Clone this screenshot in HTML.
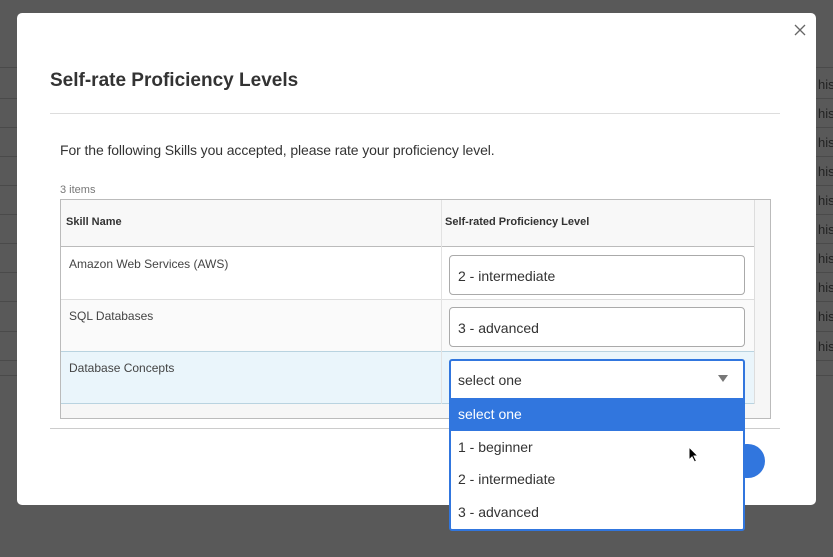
<!DOCTYPE html>
<html><head><style>
*{box-sizing:border-box;margin:0;padding:0}
body{width:833px;height:557px;overflow:hidden;background:#595959;font-family:"Liberation Sans",sans-serif;position:relative;color:#333}
.hl{position:absolute;left:0;right:0;height:1px;background:#4a4a4a}
.his{position:absolute;left:818px;font-size:13px;color:#222}
.modal{position:absolute;left:17px;top:13px;width:799px;height:492px;background:#fff;border-radius:5px}
.a{position:absolute}
.row{position:absolute;left:0;width:693px;border-bottom:1px solid #ddd}
.sel{position:absolute;left:449px;width:296px;height:36px;border:1px solid #aaa;border-radius:4px;background:#fff;font-size:14px;color:#333;padding:10px 8px}
</style></head><body>
<div class="hl" style="top:67px"></div>
<div class="hl" style="top:98px"></div><div class="hl" style="top:127px"></div><div class="hl" style="top:156px"></div><div class="hl" style="top:185px"></div><div class="hl" style="top:214px"></div><div class="hl" style="top:243px"></div><div class="hl" style="top:272px"></div><div class="hl" style="top:301px"></div><div class="hl" style="top:331px"></div><div class="hl" style="top:360px"></div><div class="hl" style="top:375px"></div>
<div class="his" style="top:77px">his</div><div class="his" style="top:106px">his</div><div class="his" style="top:135px">his</div><div class="his" style="top:164px">his</div><div class="his" style="top:193px">his</div><div class="his" style="top:222px">his</div><div class="his" style="top:251px">his</div><div class="his" style="top:280px">his</div><div class="his" style="top:309px">his</div><div class="his" style="top:339px">his</div>
<div class="modal"></div>
<svg class="a" style="left:794px;top:24px" width="12" height="12" viewBox="0 0 12 12"><path d="M1 1L11 11M11 1L1 11" stroke="#666" stroke-width="1.3"/></svg>
<div class="a" style="left:50px;top:70px;font-size:19px;font-weight:bold;color:#333">Self-rate Proficiency Levels</div>
<div class="a" style="left:50px;top:113px;width:730px;height:1px;background:#ddd"></div>
<div class="a" style="left:60px;top:142px;font-size:14px;color:#333;letter-spacing:-0.1px">For the following Skills you accepted, please rate your proficiency level.</div>
<div class="a" style="left:60px;top:184px;font-size:11px;color:#777">3 items</div>
<div class="a" style="left:60px;top:199px;width:711px;height:220px;border:1px solid #bbb;background:#f6f6f6">
 <div class="row" style="top:0;height:47px;background:#f8f8f8;border-bottom:1px solid #bbb"></div>
 <div class="a" style="left:5px;top:16px;font-size:11px;font-weight:bold;color:#333">Skill Name</div>
 <div class="a" style="left:384px;top:16px;font-size:11px;font-weight:bold;color:#333">Self-rated Proficiency Level</div>
 <div class="row" style="top:47px;height:53px;background:#fff"></div>
 <div class="row" style="top:100px;height:52px;background:#fafafa"></div>
 <div class="row" style="top:151px;height:53px;background:#eaf5fb;border-top:1px solid #b9d3e0;border-bottom:1px solid #b9d3e0"></div>
 <div class="a" style="left:380px;top:0;width:1px;height:204px;background:#e2e2e2"></div>
 <div class="a" style="left:693px;top:0;width:1px;height:204px;background:#ddd"></div>
 <div class="a" style="left:8px;top:57px;font-size:12px;color:#444">Amazon Web Services (AWS)</div>
 <div class="a" style="left:8px;top:109px;font-size:12px;color:#444">SQL Databases</div>
 <div class="a" style="left:8px;top:161px;font-size:12px;color:#444">Database Concepts</div>
</div>
<div class="sel" style="top:255px;height:40px;padding-top:12px">2 - intermediate</div>
<div class="sel" style="top:307px;height:40px;padding-top:12px">3 - advanced</div>
<div class="a" style="left:50px;top:428px;width:730px;height:1px;background:#ccc"></div>
<div class="a" style="left:729px;top:444px;width:36px;height:34px;border-radius:17px;background:#3176de"></div>
<div class="a" style="left:449px;top:359px;width:296px;height:172px;border:2px solid #3176de;border-radius:3px;background:#fff;font-size:14px;color:#333">
 <div style="height:37px;padding:11px 7px;position:relative">select one<span style="position:absolute;right:15px;top:14px;border-left:5px solid transparent;border-right:5px solid transparent;border-top:7px solid #777"></span></div>
 <div style="height:33px;padding:8px 7px;background:#3176de;color:#fff">select one</div>
 <div style="height:33px;padding:8px 7px">1 - beginner</div>
 <div style="height:32px;padding:7px 7px">2 - intermediate</div>
 <div style="height:33px;padding:8px 7px">3 - advanced</div>
</div>
<svg class="a" style="left:688px;top:446px" width="12" height="18" viewBox="0 0 12 18"><path d="M1 1 L1 14 L4 11 L6.5 16 L8.5 15 L6 10 L10 10 Z" fill="#000" stroke="#fff" stroke-width="1"/></svg>
</body></html>
